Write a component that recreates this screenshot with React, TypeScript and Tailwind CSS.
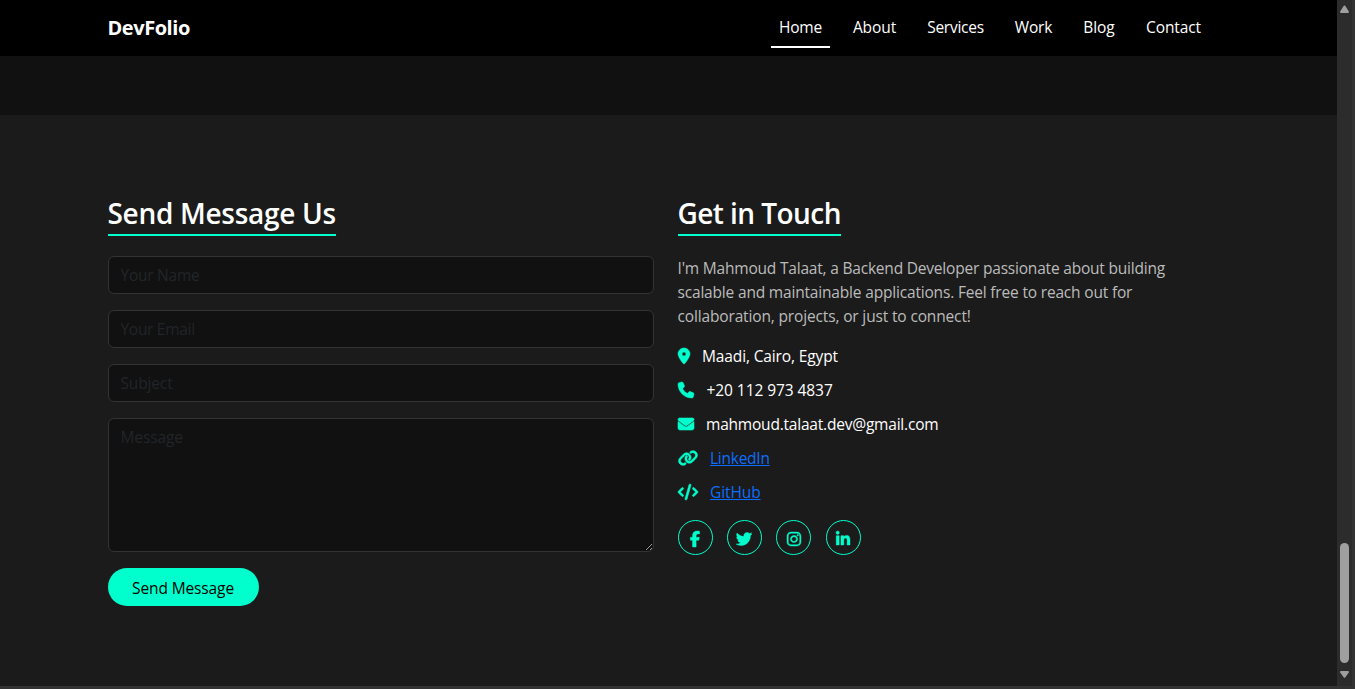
import type { ReactNode } from "react";
import {
  FaLocationDot,
  FaPhone,
  FaEnvelope,
  FaLink,
  FaCode,
  FaFacebookF,
  FaTwitter,
  FaInstagram,
  FaLinkedinIn,
} from "react-icons/fa6";

const links = [
  { label: "Home", box: "w-[59px]", track: "tracking-[-0.15px]" },
  { label: "About", box: "w-[59px]", track: "tracking-[-0.1px]" },
  { label: "Services", box: "w-[73px]", track: "tracking-[-0.25px]" },
  { label: "Work", box: "w-[53px]", track: "tracking-[-0.2px]" },
  { label: "Blog", box: "w-[48px]", track: "tracking-[-0.1px]" },
  { label: "Contact", box: "w-[71px]", track: "tracking-[-0.1px]" },
];

function Navbar() {
  return (
    <header className="flex h-14 shrink-0 items-center justify-between bg-black pr-[128px] pl-[107.5px]">
      <a className="text-[20px] leading-[30px] font-bold tracking-[-0.45px] whitespace-nowrap">DevFolio</a>
      <nav className="flex h-10 gap-[15px]">
        {links.map((l, i) => (
          <a
            key={l.label}
            className={`flex justify-center border-b-2 pt-[7px] leading-6 whitespace-nowrap ${l.box} ${l.track} ${
              i === 0 ? "border-white" : "border-transparent"
            }`}
          >
            {l.label}
          </a>
        ))}
      </nav>
    </header>
  );
}

function Heading({ children, className }: { children: ReactNode; className: string }) {
  return (
    <h2
      className={`mb-5 h-[42px] border-b-2 border-[#00ffcc] text-[28px] leading-[39px] font-semibold whitespace-nowrap ${className}`}
    >
      {children}
    </h2>
  );
}

const field =
  "block w-full rounded-md border border-[#333333] bg-[#111111] px-3 py-1.5 leading-6 text-[#e0e0e0] placeholder:text-[#212529] outline-none";

function ContactForm() {
  return (
    <form className="w-[546px]">
      <Heading className="w-[228px] tracking-[-0.3px]">Send Message Us</Heading>
      <div className="flex flex-col gap-4">
        <input className={`${field} h-[38px] tracking-[-0.25px]`} placeholder="Your Name" />
        <input className={`${field} h-[38px] tracking-[-0.3px]`} placeholder="Your Email" />
        <input className={`${field} h-[38px] tracking-[-0.15px]`} placeholder="Subject" />
        <textarea className={`${field} h-[134px] resize-y tracking-[-0.1px]`} placeholder="Message" />
        <button
          type="button"
          className="h-[38px] w-[151px] rounded-full bg-[#00ffcc] pt-px leading-6 tracking-[-0.12px] whitespace-nowrap text-black"
        >
          Send Message
        </button>
      </div>
    </form>
  );
}

function Details() {
  return (
    <section className="w-[546px]">
      <Heading className="w-[163px] tracking-[-0.55px]">Get in Touch</Heading>
      <p className="mb-4 leading-6 whitespace-nowrap text-[#bbbbbb]">
        <span className="tracking-[-0.2px]">I'm Mahmoud Talaat, a Backend Developer passionate about building</span>
        <br />
        <span className="tracking-[-0.18px]">scalable and maintainable applications. Feel free to reach out for</span>
        <br />
        <span className="tracking-[-0.15px]">collaboration, projects, or just to connect!</span>
      </p>
      <ul className="mb-4 flex flex-col gap-2.5 leading-6 whitespace-nowrap [&_svg]:shrink-0 [&_svg]:overflow-visible [&_svg]:stroke-[#00ffcc] [&_svg]:stroke-[18] [&_svg]:text-[#00ffcc]">
        <li className="flex h-6 items-center">
          <FaLocationDot className="mr-[12.5px] h-4 w-3" />
          <span className="tracking-[-0.13px]">Maadi, Cairo, Egypt</span>
        </li>
        <li className="flex h-6 items-center">
          <FaPhone className="mr-[13px] h-4 w-4" />
          <span className="tracking-[-0.07px]">+20 112 973 4837</span>
        </li>
        <li className="flex h-6 items-center">
          <FaEnvelope className="mr-[12.5px] h-4 w-4 [stroke-width:8]" />
          <span className="tracking-[-0.21px]">mahmoud.talaat.dev@gmail.com</span>
        </li>
        <li className="flex h-6 items-center">
          <FaLink className="mr-[12.5px] h-4 w-5" />
          <a className="tracking-[-0.25px] text-[#0d6efd] underline">LinkedIn</a>
        </li>
        <li className="flex h-6 items-center">
          <FaCode className="mr-[12.5px] h-4 w-5" />
          <a className="tracking-[-0.1px] text-[#0d6efd] underline">GitHub</a>
        </li>
      </ul>
      <div className="flex gap-[14.4px]">
        {[FaFacebookF, FaTwitter, FaInstagram, FaLinkedinIn].map((Icon, i) => (
          <a
            key={i}
            className="flex size-[35px] items-center justify-center rounded-full border border-[#00ffcc] pt-0.5 text-[#00ffcc]"
          >
            <Icon className="size-4 overflow-visible stroke-[#00ffcc] stroke-[14]" />
          </a>
        ))}
      </div>
    </section>
  );
}

function Scrollbar() {
  return (
    <div className="flex w-[18px] shrink-0 border-r-[3px] border-[#333333] bg-[#2c2c2c]">
      <div className="flex w-[15px] flex-col items-center">
        <svg className="mt-[5px] h-2 w-[9px]" viewBox="0 0 9 8">
          <path d="M3.8 .8Q4.5 0 5.2 .8L8.8 6.4Q9.2 8 8 8H1Q-.2 8 .2 6.4Z" fill="#9f9f9f" />
        </svg>
        <div className="mt-[530px] h-[120px] w-[9px] rounded-full bg-[#9f9f9f]" />
        <svg className="mt-2 h-[7px] w-[9px]" viewBox="0 0 9 7">
          <path d="M3.8 6.4Q4.5 7.2 5.2 6.4L8.8 1.4Q9.2 0 8 0H1Q-.2 0 .2 1.4Z" fill="#9f9f9f" />
        </svg>
      </div>
    </div>
  );
}

export default function App() {
  return (
    <div className="flex h-[689px] w-[1355px] flex-col overflow-hidden bg-[#333333] font-['Open_Sans','Noto_Sans',sans-serif] text-[15.5px] text-white">
      <div className="flex h-[686px]">
        <div className="flex w-[1337px] flex-col">
          <Navbar />
          <div className="h-[59px] shrink-0 bg-[#111111]" />
          <main className="flex grow gap-6 bg-[#1b1b1b] pt-[79px] pl-[107.5px]">
            <ContactForm />
            <Details />
          </main>
        </div>
        <Scrollbar />
      </div>
    </div>
  );
}
